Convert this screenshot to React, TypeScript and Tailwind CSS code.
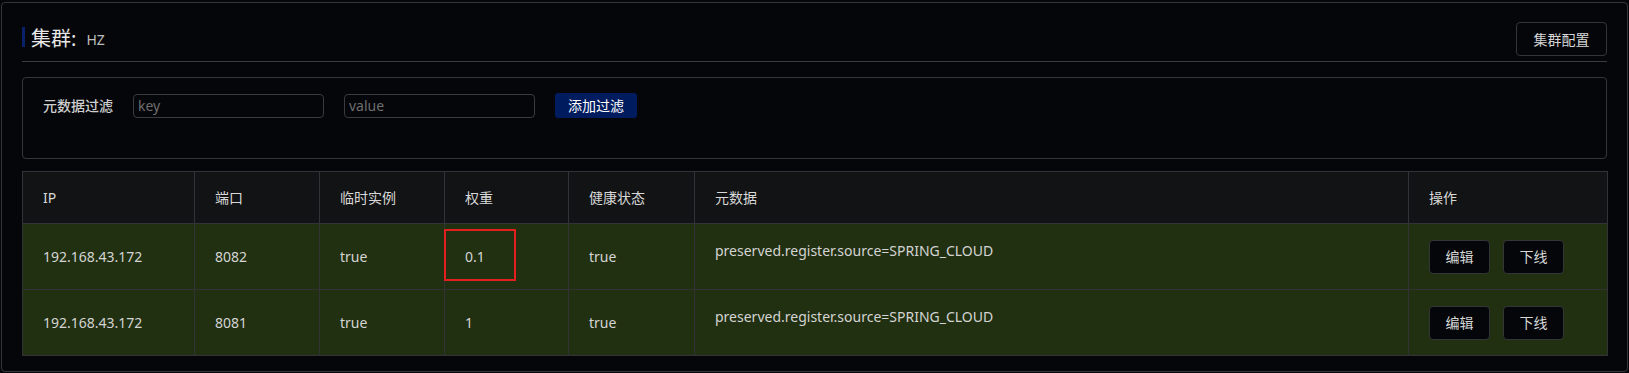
import React from 'react';

interface Instance {
  ip: string;
  port: number;
  ephemeral: boolean;
  weight: string;
  healthy: boolean;
  metadata: string;
  marked?: boolean;
}

const instances: Instance[] = [
  { ip: '192.168.43.172', port: 8082, ephemeral: true, weight: '0.1', healthy: true, metadata: 'preserved.register.source=SPRING_CLOUD', marked: true },
  { ip: '192.168.43.172', port: 8081, ephemeral: true, weight: '1', healthy: true, metadata: 'preserved.register.source=SPRING_CLOUD' },
];

const font = "font-['Noto_Sans','Noto_Sans_CJK_SC',sans-serif]";

const DarkButton: React.FC<{ children: React.ReactNode; className?: string }> = ({ children, className = '' }) => (
  <button className={`h-[34px] rounded-[4px] border border-[#343538] bg-[#05060a] text-[14px] text-[#d6d6d6] ${className}`}>
    {children}
  </button>
);

const App: React.FC = () => {
  const headers = ['IP', '端口', '临时实例', '权重', '健康状态', '元数据', '操作'];

  return (
    <div className={`min-h-[373px] w-[1629px] bg-[#05060a] pl-px pt-[2px] ${font}`}>
      <div className="h-[370px] w-[1627px] rounded-[4px] border border-[#353638] bg-[#05060a] px-5 pt-[19px]">
        {/* title */}
        <div className="flex items-center justify-between border-b border-[#3a3b3d] pb-[5px]">
          <div className="flex items-center">
            <div className="mt-[-4px] h-[20px] w-[3px] bg-[#0a2068]"></div>
            <span className="ml-[6px] text-[20px] leading-[28px] text-[#e8e8e8]">集群:</span>
            <span className="ml-[10px] text-[14px] text-[#bdbdbd]">HZ</span>
          </div>
          <DarkButton className="w-[91px]">集群配置</DarkButton>
        </div>

        {/* filter */}
        <div className="mt-[15px] h-[82px] rounded-[4px] border border-[#353638] px-5 pt-[15px]">
          <div className="flex items-center">
            <span className="w-[76px] text-[14px] font-medium text-[#cfcfcf]">元数据过滤</span>
            <input
              placeholder="key"
              className="ml-[14px] h-[24px] w-[191px] rounded-[4px] border border-[#3a3b3e] bg-transparent px-[4px] text-[14px] text-[#cfcfcf] placeholder:text-[#6e6e6e] outline-none"
            />
            <input
              placeholder="value"
              className="ml-[20px] h-[24px] w-[191px] rounded-[4px] border border-[#3a3b3e] bg-transparent px-[4px] text-[14px] text-[#cfcfcf] placeholder:text-[#6e6e6e] outline-none"
            />
            <button className="ml-[20px] h-[25px] w-[82px] rounded-[3px] bg-[#001b5e] text-[14px] text-white">添加过滤</button>
          </div>
        </div>

        {/* table */}
        <table className="mt-[12px] w-[1585px] table-fixed border-collapse text-[14px] text-[#d4d4d4]">
          <colgroup>
            <col className="w-[172px]" />
            <col className="w-[125px]" />
            <col className="w-[125px]" />
            <col className="w-[124px]" />
            <col className="w-[126px]" />
            <col className="w-[714px]" />
            <col className="w-[199px]" />
          </colgroup>
          <thead>
            <tr className="h-[52px] bg-[#121314]">
              {headers.map((h) => (
                <th key={h} className="border border-[#323336] px-5 text-left font-normal text-[#d8d8d8]">{h}</th>
              ))}
            </tr>
          </thead>
          <tbody>
            {instances.map((it) => (
              <tr key={it.port} className="h-[66px] bg-[#213010]">
                <td className="border border-[#323336] px-5">{it.ip}</td>
                <td className="border border-[#323336] px-5">{it.port}</td>
                <td className="border border-[#323336] px-5">{String(it.ephemeral)}</td>
                <td className="relative border border-[#323336] px-5">
                  {it.weight}
                  {it.marked && (
                    <div className="absolute left-[-1px] top-[5px] h-[52px] w-[72px] border-2 border-[#e3201f]"></div>
                  )}
                </td>
                <td className="border border-[#323336] px-5">{String(it.healthy)}</td>
                <td className="border border-[#323336] px-5">
                  <div className="mb-3">{it.metadata}</div>
                </td>
                <td className="border border-[#323336] px-5">
                  <div className="flex gap-[13px]">
                    <DarkButton className="w-[61px]">编辑</DarkButton>
                    <DarkButton className="w-[61px]">下线</DarkButton>
                  </div>
                </td>
              </tr>
            ))}
          </tbody>
        </table>
      </div>
    </div>
  );
};

export default App;
